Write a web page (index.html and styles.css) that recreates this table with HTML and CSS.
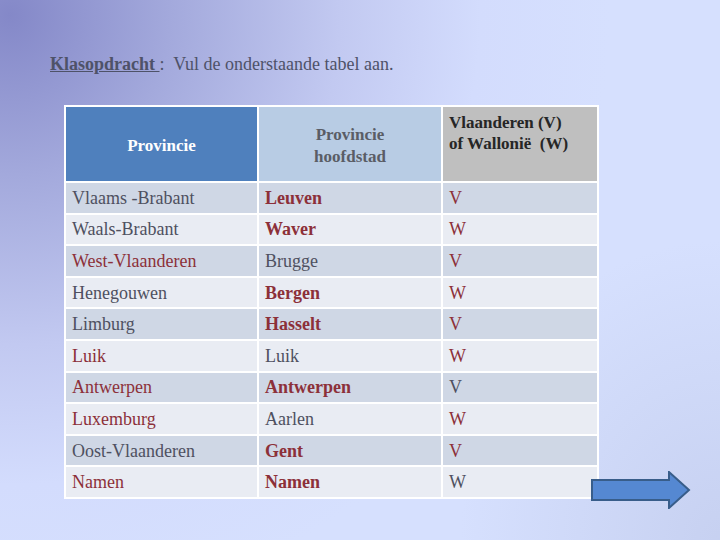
FILE: index.html
```html
<!DOCTYPE html>
<html>
<head>
<meta charset="utf-8">
<link rel="stylesheet" href="styles.css">
</head>
<body>
<div class="slide">
  <p class="task"><span class="task-label">Klasopdracht </span> :&nbsp; Vul de onderstaande tabel aan.</p>
  <table class="prov">
    <thead>
      <tr>
        <th class="h1">Provincie</th>
        <th class="h2">Provincie<br>hoofdstad</th>
        <th class="h3">Vlaanderen (V)<br>of Wallonië&nbsp; (W)</th>
      </tr>
    </thead>
    <tbody>
      <tr class="dark"><td>Vlaams -Brabant</td><td class="r b">Leuven</td><td class="r">V</td></tr>
      <tr class="light"><td>Waals-Brabant</td><td class="r b">Waver</td><td class="r">W</td></tr>
      <tr class="dark"><td class="r">West-Vlaanderen</td><td>Brugge</td><td class="r">V</td></tr>
      <tr class="light"><td>Henegouwen</td><td class="r b">Bergen</td><td class="r">W</td></tr>
      <tr class="dark"><td>Limburg</td><td class="r b">Hasselt</td><td class="r">V</td></tr>
      <tr class="light"><td class="r">Luik</td><td>Luik</td><td class="r">W</td></tr>
      <tr class="dark"><td class="r">Antwerpen</td><td class="r b">Antwerpen</td><td>V</td></tr>
      <tr class="light"><td class="r">Luxemburg</td><td>Aarlen</td><td class="r">W</td></tr>
      <tr class="dark"><td>Oost-Vlaanderen</td><td class="r b">Gent</td><td class="r">V</td></tr>
      <tr class="light"><td class="r">Namen</td><td class="r b">Namen</td><td>W</td></tr>
    </tbody>
  </table>
  <svg class="next" width="100" height="38" viewBox="0 0 100 38">
    <polygon points="1,9 78,9 78,1 98,19 78,37 78,29 1,29" fill="#5588d2" stroke="#385d8a" stroke-width="2"/>
  </svg>
</div>
</body>
</html>
```

FILE: styles.css
```css
* {
  font-family: "Liberation Serif", "Times New Roman", serif;
}
body {
  margin: 0;
  padding: 0;
}
.slide {
  position: relative;
  width: 720px;
  height: 540px;
  box-sizing: border-box;
  padding: 54px 0 0 50px;
  overflow: hidden;
  background:
    radial-gradient(ellipse 260px 300px at 720px 540px, rgba(180,190,225,0.45), rgba(180,190,225,0) 100%),
    radial-gradient(circle at 10px 15px, #8488c8 0px, #a3a9dc 160px, #c2c9f1 330px, #d3dcfd 470px, #d6e0fe 600px);
}
.task {
  margin: 0;
  font-size: 18px;
  line-height: 21px;
  color: #4e5268;
}
.task-label {
  font-weight: bold;
  text-decoration: underline;
}
.prov {
  margin: 30px 0 0 14px;
  border-collapse: separate;
  border-spacing: 2px;
  background: #ffffff;
  font-size: 18px;
  table-layout: fixed;
  width: 535px;
}
.prov th {
  box-sizing: border-box;
  height: 74px;
  padding: 0;
  font-size: 17px;
  line-height: 22px;
}
.h1 {
  width: 191px;
  background: #4f80bd;
  color: #ffffff;
  text-align: center;
  padding-top: 3px !important;
}
.h2 {
  width: 182px;
  background: #b8cce4;
  color: #5a5d66;
  text-align: center;
  padding-top: 4px !important;
}
.h3 {
  background: #bfbfbf;
  color: #262626;
  text-align: left;
  vertical-align: top;
  padding: 5px 0 0 6px !important;
  line-height: 21px !important;
}
.prov td {
  height: 29.6px;
  padding: 0 0 0 6px;
  color: #4e5060;
  line-height: 20px;
  vertical-align: middle;
}
.prov tr.dark td { background: #cfd7e5; }
.prov tr.light td { background: #e9ecf3; }
.prov td.r { color: #8c3039; }
.prov td.b { font-weight: bold; }
.next {
  position: absolute;
  left: 591px;
  top: 471px;
}
```
